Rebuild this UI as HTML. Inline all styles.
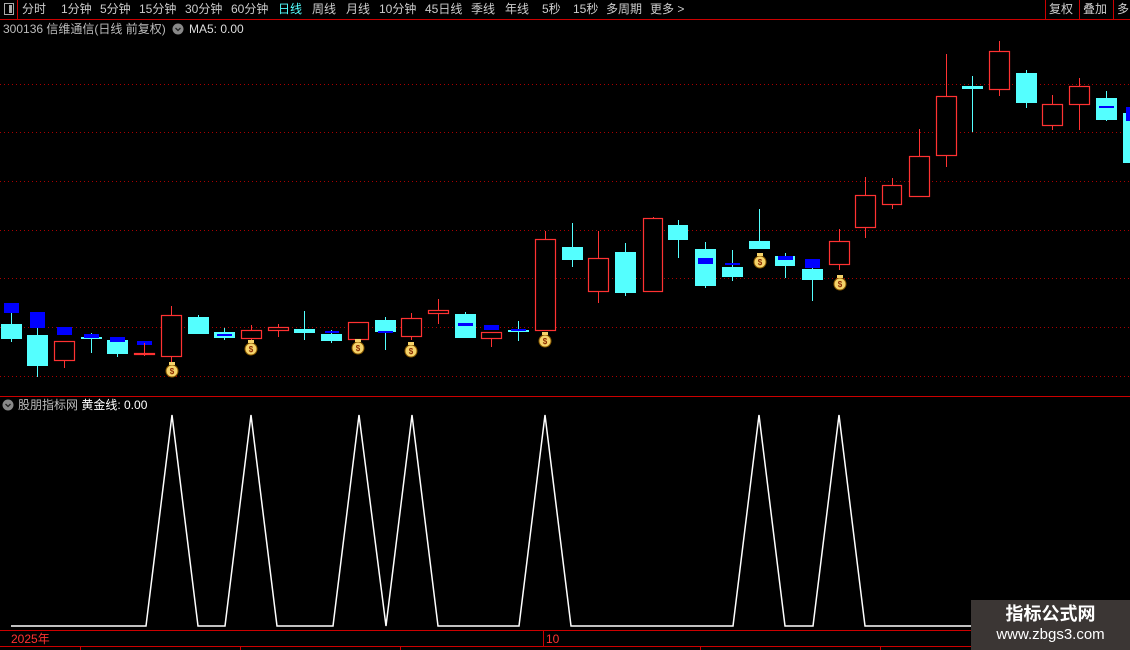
<!DOCTYPE html>
<html><head><meta charset="utf-8"><style>
body{margin:0;background:#000;width:1130px;height:650px;overflow:hidden;position:relative;font-family:"Liberation Sans","Noto Sans CJK SC",sans-serif;}
.t{position:absolute;font-size:12px;white-space:nowrap;line-height:14px}
.m{position:absolute;top:2px;font-size:12px;line-height:14px;color:#ccc;white-space:nowrap}
</style></head><body>
<svg width="1130" height="650" style="position:absolute;left:0;top:0">
<g stroke="#a00" stroke-dasharray="1,3" stroke-width="1">
<line x1="0" y1="84.5" x2="1130" y2="84.5"/><line x1="0" y1="132.5" x2="1130" y2="132.5"/><line x1="0" y1="181.5" x2="1130" y2="181.5"/><line x1="0" y1="230.5" x2="1130" y2="230.5"/><line x1="0" y1="278.5" x2="1130" y2="278.5"/><line x1="0" y1="327.5" x2="1130" y2="327.5"/><line x1="0" y1="376.5" x2="1130" y2="376.5"/>
</g>
<line x1="0" y1="19.5" x2="1130" y2="19.5" stroke="#c00"/>
<line x1="17.5" y1="0" x2="17.5" y2="19" stroke="#c00"/>
<rect x="4.5" y="3.5" width="9" height="11" fill="none" stroke="#aaa"/><rect x="9" y="5" width="3" height="8" fill="#aaa"/>
<line x1="1045.5" y1="0" x2="1045.5" y2="19" stroke="#c00"/><line x1="1079.5" y1="0" x2="1079.5" y2="19" stroke="#c00"/><line x1="1113.5" y1="0" x2="1113.5" y2="19" stroke="#c00"/>
<line x1="0" y1="396.5" x2="1130" y2="396.5" stroke="#c00"/>
<line x1="0" y1="630.5" x2="1130" y2="630.5" stroke="#c00"/>
<line x1="0" y1="646.5" x2="1130" y2="646.5" stroke="#c00"/>
<line x1="543.5" y1="630" x2="543.5" y2="646" stroke="#c00"/>
<g stroke="#54ffff" stroke-width="1">
<line x1="11.5" y1="313" x2="11.5" y2="342"/><line x1="37.5" y1="328" x2="37.5" y2="377"/><line x1="91.5" y1="333" x2="91.5" y2="353"/><line x1="117.5" y1="337" x2="117.5" y2="357"/><line x1="198.5" y1="315" x2="198.5" y2="334"/><line x1="224.5" y1="328" x2="224.5" y2="340"/><line x1="304.5" y1="311" x2="304.5" y2="340"/><line x1="331.5" y1="330" x2="331.5" y2="343"/><line x1="385.5" y1="317" x2="385.5" y2="350"/><line x1="465.5" y1="312" x2="465.5" y2="338"/><line x1="518.5" y1="321" x2="518.5" y2="341"/><line x1="572.5" y1="223" x2="572.5" y2="267"/><line x1="625.5" y1="243" x2="625.5" y2="296"/><line x1="678.5" y1="220" x2="678.5" y2="258"/><line x1="705.5" y1="242" x2="705.5" y2="288"/><line x1="732.5" y1="250" x2="732.5" y2="281"/><line x1="759.5" y1="209" x2="759.5" y2="249"/><line x1="785.5" y1="253" x2="785.5" y2="278"/><line x1="812.5" y1="259" x2="812.5" y2="301"/><line x1="972.5" y1="76" x2="972.5" y2="132"/><line x1="1026.5" y1="70" x2="1026.5" y2="108"/><line x1="1106.5" y1="91" x2="1106.5" y2="121"/>
</g>
<g fill="#54ffff">
<rect x="1" y="324" width="21" height="15"/><rect x="27" y="335" width="21" height="31"/><rect x="81" y="337" width="21" height="2"/><rect x="107" y="340" width="21" height="14"/><rect x="188" y="317" width="21" height="17"/><rect x="214" y="332" width="21" height="6"/><rect x="294" y="329" width="21" height="4"/><rect x="321" y="334" width="21" height="7"/><rect x="375" y="320" width="21" height="12"/><rect x="455" y="314" width="21" height="24"/><rect x="508" y="330" width="21" height="2"/><rect x="562" y="247" width="21" height="13"/><rect x="615" y="252" width="21" height="41"/><rect x="668" y="225" width="20" height="15"/><rect x="695" y="249" width="21" height="37"/><rect x="722" y="267" width="21" height="10"/><rect x="749" y="241" width="21" height="8"/><rect x="775" y="256" width="20" height="10"/><rect x="802" y="269" width="21" height="11"/><rect x="962" y="86" width="21" height="3"/><rect x="1016" y="73" width="21" height="30"/><rect x="1096" y="98" width="21" height="22"/><rect x="1123" y="113" width="7" height="50"/>
</g>
<g fill="#0000ff">
<rect x="4" y="303" width="15" height="10"/><rect x="30" y="312" width="15" height="16"/><rect x="57" y="327" width="15" height="8"/><rect x="84" y="334" width="15" height="4"/><rect x="110" y="337" width="15" height="5"/><rect x="137" y="341" width="15" height="4"/><rect x="217" y="334" width="15" height="2"/><rect x="325" y="331" width="14" height="2"/><rect x="378" y="331" width="15" height="2"/><rect x="458" y="323" width="15" height="3"/><rect x="484" y="325" width="15" height="5"/><rect x="511" y="329" width="15" height="2"/><rect x="698" y="258" width="15" height="6"/><rect x="725" y="263" width="15" height="2"/><rect x="778" y="256" width="15" height="4"/><rect x="805" y="259" width="15" height="9"/><rect x="1099" y="106" width="15" height="2"/><rect x="1126" y="107" width="4" height="14"/>
</g>
<g stroke="#ff3232" stroke-width="1">
<line x1="64.5" y1="341" x2="64.5" y2="368"/><line x1="144.5" y1="343" x2="144.5" y2="356"/><line x1="171.5" y1="306" x2="171.5" y2="363"/><line x1="251.5" y1="325" x2="251.5" y2="342"/><line x1="278.5" y1="324" x2="278.5" y2="337"/><line x1="358.5" y1="322" x2="358.5" y2="340"/><line x1="411.5" y1="313" x2="411.5" y2="340"/><line x1="438.5" y1="299" x2="438.5" y2="324"/><line x1="491.5" y1="332" x2="491.5" y2="347"/><line x1="545.5" y1="231" x2="545.5" y2="331"/><line x1="598.5" y1="231" x2="598.5" y2="303"/><line x1="653.5" y1="217" x2="653.5" y2="292"/><line x1="839.5" y1="229" x2="839.5" y2="270"/><line x1="865.5" y1="177" x2="865.5" y2="238"/><line x1="892.5" y1="178" x2="892.5" y2="209"/><line x1="919.5" y1="129" x2="919.5" y2="197"/><line x1="946.5" y1="54" x2="946.5" y2="167"/><line x1="999.5" y1="41" x2="999.5" y2="96"/><line x1="1052.5" y1="95" x2="1052.5" y2="130"/><line x1="1079.5" y1="78" x2="1079.5" y2="130"/>
</g>
<g stroke="#ff3232" stroke-width="1.2" fill="#000">
<rect x="54.5" y="341.5" width="20" height="19"/><rect x="134.5" y="353.5" width="20" height="1"/><rect x="161.5" y="315.5" width="20" height="41"/><rect x="241.5" y="330.5" width="20" height="8"/><rect x="268.5" y="327.5" width="20" height="3"/><rect x="348.5" y="322.5" width="20" height="17"/><rect x="401.5" y="318.5" width="20" height="18"/><rect x="428.5" y="310.5" width="20" height="3"/><rect x="481.5" y="332.5" width="20" height="6"/><rect x="535.5" y="239.5" width="20" height="91"/><rect x="588.5" y="258.5" width="20" height="33"/><rect x="643.5" y="218.5" width="19" height="73"/><rect x="829.5" y="241.5" width="20" height="23"/><rect x="855.5" y="195.5" width="20" height="32"/><rect x="882.5" y="185.5" width="19" height="19"/><rect x="909.5" y="156.5" width="20" height="40"/><rect x="936.5" y="96.5" width="20" height="59"/><rect x="989.5" y="51.5" width="20" height="38"/><rect x="1042.5" y="104.5" width="20" height="21"/><rect x="1069.5" y="86.5" width="20" height="18"/>
</g>
<g font-family="Liberation Sans" font-size="8" font-weight="bold" text-anchor="middle">
<g transform="translate(172,371)"><circle r="6" fill="#f5d36a" stroke="#8a5a00"/><rect x="-3" y="-9" width="6" height="3" fill="#f5d36a"/><text y="3" fill="#8a2a00">$</text></g>
<g transform="translate(251,349)"><circle r="6" fill="#f5d36a" stroke="#8a5a00"/><rect x="-3" y="-9" width="6" height="3" fill="#f5d36a"/><text y="3" fill="#8a2a00">$</text></g>
<g transform="translate(358,348)"><circle r="6" fill="#f5d36a" stroke="#8a5a00"/><rect x="-3" y="-9" width="6" height="3" fill="#f5d36a"/><text y="3" fill="#8a2a00">$</text></g>
<g transform="translate(411,351)"><circle r="6" fill="#f5d36a" stroke="#8a5a00"/><rect x="-3" y="-9" width="6" height="3" fill="#f5d36a"/><text y="3" fill="#8a2a00">$</text></g>
<g transform="translate(545,341)"><circle r="6" fill="#f5d36a" stroke="#8a5a00"/><rect x="-3" y="-9" width="6" height="3" fill="#f5d36a"/><text y="3" fill="#8a2a00">$</text></g>
<g transform="translate(760,262)"><circle r="6" fill="#f5d36a" stroke="#8a5a00"/><rect x="-3" y="-9" width="6" height="3" fill="#f5d36a"/><text y="3" fill="#8a2a00">$</text></g>
<g transform="translate(840,284)"><circle r="6" fill="#f5d36a" stroke="#8a5a00"/><rect x="-3" y="-9" width="6" height="3" fill="#f5d36a"/><text y="3" fill="#8a2a00">$</text></g>
</g>
<polyline fill="none" stroke="#fff" stroke-width="1.5" points="11,626 146,626 172,415 198,626 225,626 251,415 277,626 333,626 359,415 386,626 412,415 438,626 519,626 545,415 571,626 733,626 759,415 785,626 813,626 839,415 865,626 975,626"/>
<circle cx="178" cy="29" r="5.5" fill="#888"/><path d="M175.5 28 L178 30.5 L180.5 28" stroke="#222" stroke-width="1.3" fill="none"/>
<circle cx="8" cy="405" r="5.5" fill="#888"/><path d="M5.5 404 L8 406.5 L10.5 404" stroke="#222" stroke-width="1.3" fill="none"/>
<g stroke="#c00"><line x1="80.5" y1="647" x2="80.5" y2="650"/><line x1="240.5" y1="647" x2="240.5" y2="650"/><line x1="400.5" y1="647" x2="400.5" y2="650"/><line x1="700.5" y1="647" x2="700.5" y2="650"/><line x1="880.5" y1="647" x2="880.5" y2="650"/></g>
</svg>
<span class="m" style="left:22px">分时</span><span class="m" style="left:61px">1分钟</span><span class="m" style="left:100px">5分钟</span><span class="m" style="left:139px">15分钟</span><span class="m" style="left:185px">30分钟</span><span class="m" style="left:231px">60分钟</span><span class="m" style="left:278px;color:#54ffff">日线</span><span class="m" style="left:312px">周线</span><span class="m" style="left:346px">月线</span><span class="m" style="left:379px">10分钟</span><span class="m" style="left:425px">45日线</span><span class="m" style="left:471px">季线</span><span class="m" style="left:505px">年线</span><span class="m" style="left:542px">5秒</span><span class="m" style="left:573px">15秒</span><span class="m" style="left:606px">多周期</span><span class="m" style="left:650px">更多 &gt;</span>
<div class="t" style="left:1049px;top:2px;color:#ccc">复权</div>
<div class="t" style="left:1083px;top:2px;color:#ccc">叠加</div>
<div class="t" style="left:1117px;top:2px;color:#ccc">多</div>
<div class="t" style="left:3px;top:22px;color:#bbb">300136 信维通信(日线 前复权)</div>
<div class="t" style="left:189px;top:22px;color:#ddd">MA5: 0.00</div>
<div class="t" style="left:18px;top:398px;color:#bbb">股朋指标网 <span style="color:#fff">黄金线: 0.00</span></div>
<div class="t" style="left:11px;top:632px;color:#ff3232">2025年</div>
<div class="t" style="left:546px;top:632px;color:#ff3232">10</div>
<div style="position:absolute;left:971px;top:600px;width:159px;height:50px;background:#3b3634;color:#fff;text-align:center;font-family:'Liberation Sans','Noto Sans CJK SC',sans-serif">
<div style="font-size:18px;font-weight:bold;line-height:22px;margin-top:3px">指标公式网</div>
<div style="font-size:15px;line-height:20px">www.zbgs3.com</div>
</div>
</body></html>
